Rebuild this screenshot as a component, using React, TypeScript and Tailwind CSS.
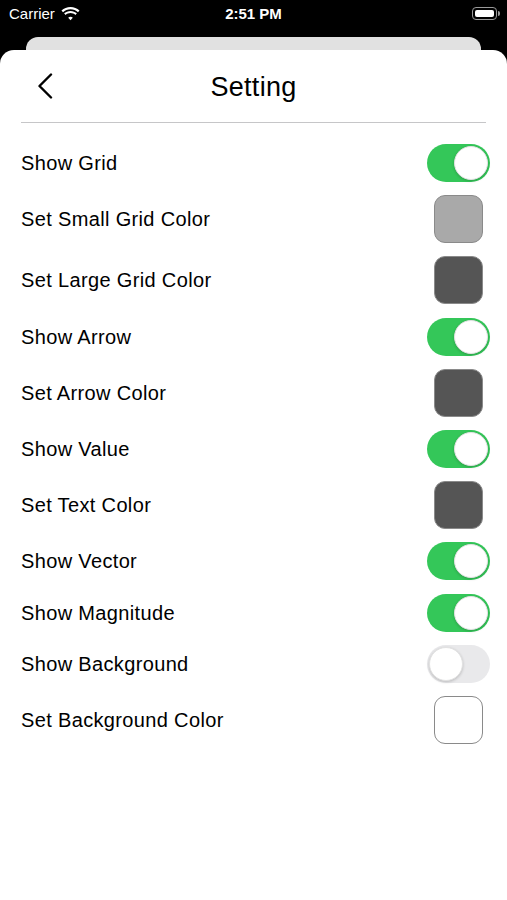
import React, { useState } from 'react';

type Row =
  | { kind: 'toggle'; label: string; on: boolean }
  | { kind: 'color'; label: string; swatch: string };

const rows: Row[] = [
  { kind: 'toggle', label: 'Show Grid', on: true },
  { kind: 'color', label: 'Set Small Grid Color', swatch: 'bg-[#a9a9a9]' },
  { kind: 'color', label: 'Set Large Grid Color', swatch: 'bg-[#555555]' },
  { kind: 'toggle', label: 'Show Arrow', on: true },
  { kind: 'color', label: 'Set Arrow Color', swatch: 'bg-[#555555]' },
  { kind: 'toggle', label: 'Show Value', on: true },
  { kind: 'color', label: 'Set Text Color', swatch: 'bg-[#555555]' },
  { kind: 'toggle', label: 'Show Vector', on: true },
  { kind: 'toggle', label: 'Show Magnitude', on: true },
  { kind: 'toggle', label: 'Show Background', on: false },
  { kind: 'color', label: 'Set Background Color', swatch: 'bg-white' },
];

const Toggle = ({ on, onClick }: { on: boolean; onClick: () => void }) => (
  <button
    onClick={onClick}
    className={`relative w-[63px] h-[38px] rounded-full transition-colors ${on ? 'bg-[#34c759]' : 'bg-[#e9e9eb]'}`}
  >
    <span
      className={`absolute top-[2px] w-[34px] h-[34px] rounded-full bg-white shadow-[0_1px_3px_rgba(0,0,0,0.2)] border border-[#e2e2e2] transition-all ${on ? 'left-[27px]' : 'left-[2px]'}`}
    />
  </button>
);

const Wifi = () => (
  <svg width="19" height="14" viewBox="0 0 19 14" fill="white">
    <path d="M9.5 2.2c2.9 0 5.5 1.1 7.5 3l1.5-1.6C16.1 1.3 12.9 0 9.5 0S2.9 1.3.5 3.6L2 5.2c2-1.9 4.6-3 7.5-3z" />
    <path d="M9.5 6c1.9 0 3.6.7 4.9 1.9l1.5-1.6C14.2 4.8 12 3.9 9.5 3.9S4.8 4.8 3.1 6.3l1.5 1.6C5.9 6.7 7.6 6 9.5 6z" />
    <path d="M9.5 9.8c.9 0 1.7.3 2.3.9L9.5 13.3 7.2 10.7c.6-.6 1.4-.9 2.3-.9z" />
  </svg>
);

export default function App() {
  const [state, setState] = useState(rows.map((r) => (r.kind === 'toggle' ? r.on : false)));

  return (
    <div className="w-[507px] h-[900px] bg-black flex flex-col overflow-hidden font-['Liberation_Sans',Arial,sans-serif]">
      {/* status bar */}
      <div className="h-[37px] shrink-0 flex items-start pt-[5px] pl-[9px] pr-[7px] text-white relative">
        <div className="flex items-center gap-[6px] text-[15px] leading-[18px]">
          <span>Carrier</span>
          <Wifi />
        </div>
        <div className="absolute left-0 right-0 top-[5px] text-center text-[15px] leading-[18px] font-semibold">2:51 PM</div>
        <div className="ml-auto mt-[2px] flex items-center">
          <div className="w-[25px] h-[13px] rounded-[4px] border border-[#9a9a9a] p-[2px]">
            <div className="w-full h-full bg-white rounded-[2px]" />
          </div>
          <div className="w-[2px] h-[5px] bg-[#9a9a9a] rounded-r-sm ml-[1px]" />
        </div>
      </div>

      {/* card behind */}
      <div className="mx-[26px] h-[13px] shrink-0 rounded-t-[12px] bg-[#e1e1e1]" />

      {/* sheet */}
      <div className="flex-1 bg-white rounded-t-[14px] flex flex-col">
        <div className="h-[72px] shrink-0 relative flex items-center justify-center">
          <button className="absolute left-[37px] top-[23px]">
            <svg width="16" height="26" viewBox="0 0 16 26" fill="none" stroke="black" strokeWidth="2.4" strokeLinecap="round" strokeLinejoin="round">
              <path d="M14 1.5 2.5 13 14 24.5" />
            </svg>
          </button>
          <h1 className="text-[27px] text-black pt-[2px] tracking-[0.3px]">Setting</h1>
        </div>
        <div className="mx-[21px] h-px bg-[#c6c6c8]" />

        <div className="flex flex-col gap-[13.2px] pt-[21px] pl-[21px] pr-[17px]">
          {rows.map((r, i) => (
            <div key={r.label} className="flex items-center justify-between">
              <span className="text-[20px] text-black tracking-[0.35px]">{r.label}</span>
              <div className="w-[63px] flex justify-center">
                {r.kind === 'toggle' ? (
                  <Toggle
                    on={state[i]}
                    onClick={() => setState((s) => s.map((v, j) => (j === i ? !v : v)))}
                  />
                ) : (
                  <div className={`w-[49px] h-[48px] rounded-[11px] border border-[#8a8a8a] ${r.swatch}`} />
                )}
              </div>
            </div>
          ))}
        </div>
      </div>
    </div>
  );
}
